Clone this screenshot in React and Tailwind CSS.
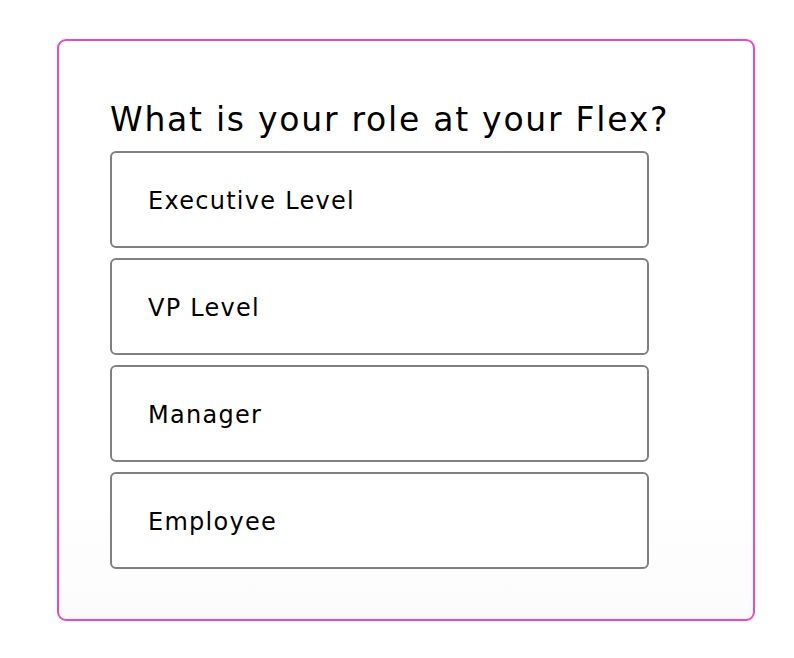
export default function App() {
  const options = ["Executive Level", "VP Level", "Manager", "Employee"];

  return (
    <div className="w-[794px] h-[658px] bg-white pt-[39px] pl-[57px]" style={{ fontFamily: '"DejaVu Sans", Verdana, sans-serif' }}>
      <div className="w-[698px] h-[582px] rounded-[9px] border-2 border-[#e94bbe] bg-gradient-to-b from-white from-80% to-[#fbfbfb] pl-[51px] pt-[57px]">
        <h1 className="text-[33px] leading-[44px] tracking-[0.053em] text-black">What is your role at your Flex?</h1>
        <div className="mt-[9px] flex flex-col gap-[10px] w-[539px]">
          {options.map((o) => (
            <button
              key={o}
              className="h-[97px] w-full rounded-[6px] border-2 border-[#808080] bg-white pl-[36px] pt-[3px] text-left text-[24px] tracking-[0.053em] text-black"
            >
              {o}
            </button>
          ))}
        </div>
      </div>
    </div>
  );
}
